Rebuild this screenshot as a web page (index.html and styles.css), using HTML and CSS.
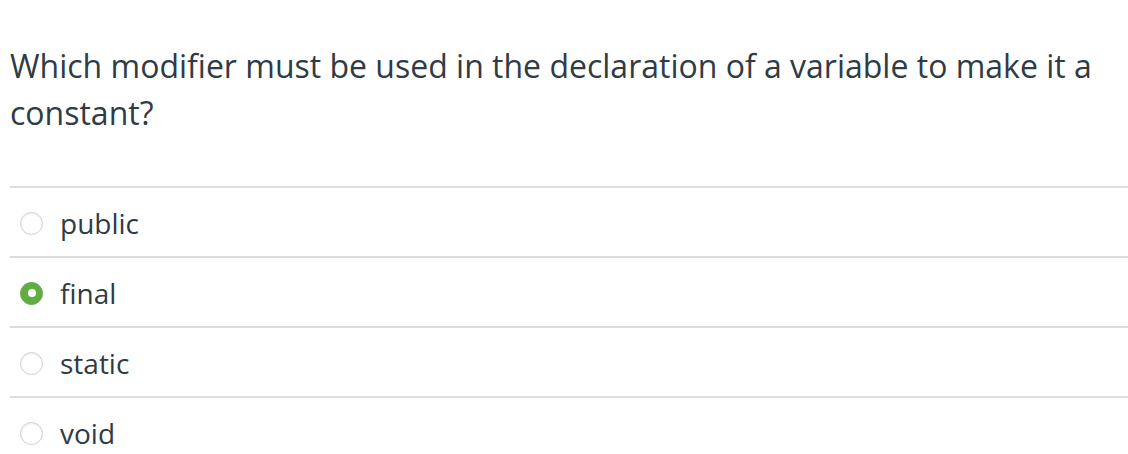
FILE: index.html
```html
<!DOCTYPE html>
<html lang="en">
<head>
    <meta charset="UTF-8">
    <meta name="viewport" content="width=device-width, initial-scale=1.0">
    <title>Quiz</title>
    <link rel="stylesheet" href="styles.css">
</head>
<body>
    <div class="quiz">
        <p class="question">Which modifier must be used in the declaration of a variable to make it a constant?</p>

        <ul class="answers">
            <li class="answer">
                <span class="radio"></span>
                <span class="label">public</span>
            </li>
            <li class="answer">
                <span class="radio checked"></span>
                <span class="label">final</span>
            </li>
            <li class="answer">
                <span class="radio"></span>
                <span class="label">static</span>
            </li>
            <li class="answer">
                <span class="radio"></span>
                <span class="label">void</span>
            </li>
        </ul>
    </div>
</body>
</html>
```

FILE: styles.css
```css
* { margin: 0; padding: 0; box-sizing: border-box; }
body {
    background: #fff;
    color: #2f3b45;
    font-family: 'Open Sans', 'Noto Sans', sans-serif;
}
.quiz {
    padding: 42px 0 0 10px;
}
.question {
    font-size: 32px;
    line-height: 47px;
    padding-right: 20px;
    margin-bottom: 50px;
}
.answers {
    list-style: none;
}
.answer {
    display: flex;
    align-items: center;
    height: 70px;
    border-top: 2px solid #dddddd;
    font-size: 28px;
}
.label {
    padding-top: 2px;
}
.radio {
    width: 23px;
    height: 23px;
    border-radius: 50%;
    border: 1px solid #cfcfcf;
    box-shadow: inset 0 1px 2px rgba(0, 0, 0, 0.08);
    margin: 2px 17px 0 10px;
    flex-shrink: 0;
    display: flex;
    align-items: center;
    justify-content: center;
}
.radio.checked {
    background: #62ad42;
    border-color: #62ad42;
    box-shadow: none;
}
.radio.checked::after {
    content: '';
    width: 8px;
    height: 8px;
    border-radius: 50%;
    background: #fff;
}
```
